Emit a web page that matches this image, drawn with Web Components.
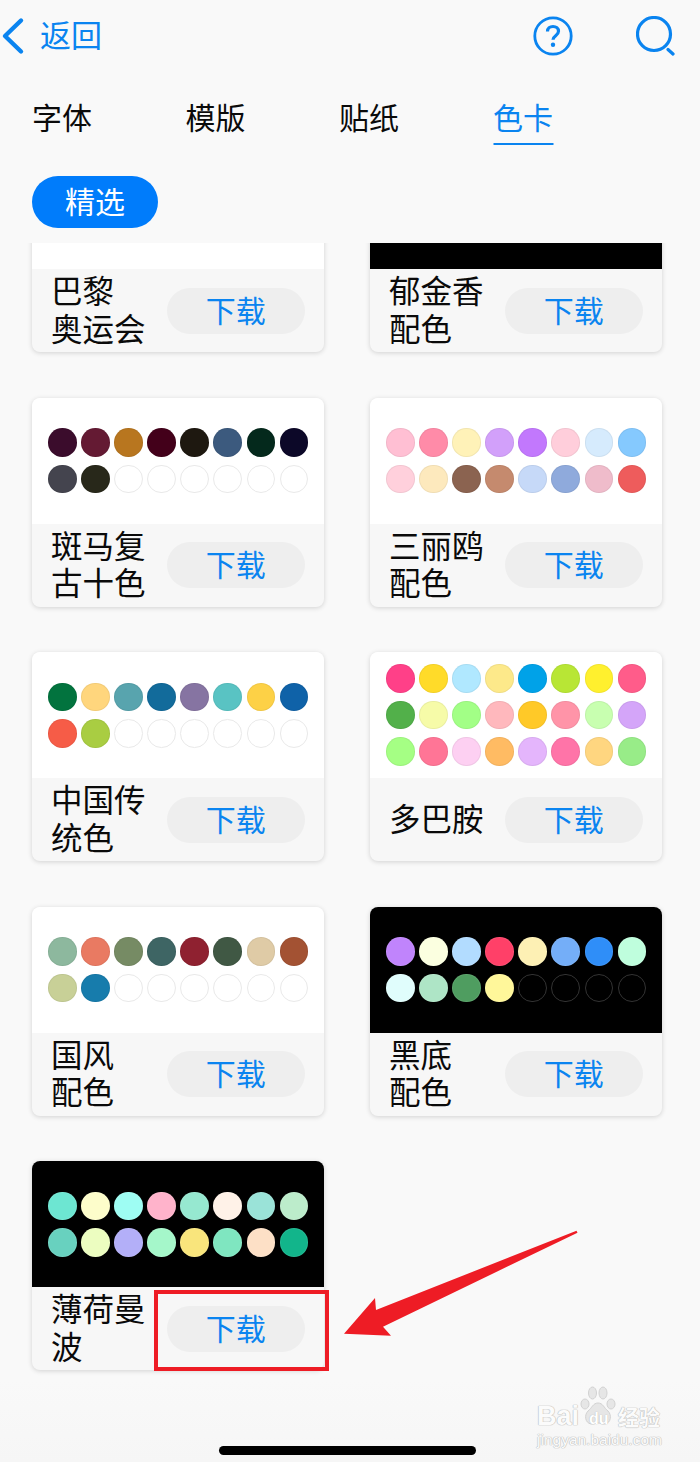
<!DOCTYPE html>
<html lang="zh-CN"><head><meta charset="utf-8"><title>色卡</title>
<style>
html,body{margin:0;padding:0;background:#f8f8f8;overflow:hidden}
body{width:700px;height:1462px;font-family:"Noto Sans CJK SC","Noto Sans",sans-serif}
</style></head><body>
<app-screen>
<nav-bar></nav-bar>
<tab-bar></tab-bar>
<filter-chip>精选</filter-chip>
<card-list>
<color-card>巴黎<br>奥运会</color-card>
<color-card dark>郁金香<br>配色</color-card>
<color-card colors="#3b0c2c,#641a33,#b8761f,#43001a,#1e1810,#3c5a7e,#04291c,#0c0828,#44444e,#28281a">斑马复<br>古十色</color-card>
<color-card colors="#ffbfd3,#ff8ba8,#fff2b8,#d2a0fa,#c278fd,#ffcedb,#d6ebfd,#85c9fe,#ffd0dc,#fde9bd,#8b6350,#c58a6e,#c6d9f8,#8faadc,#efbccb,#ee5c5c">三丽鸥<br>配色</color-card>
<color-card colors="#02733e,#ffd67d,#58a4ae,#126b9b,#8674a2,#59c3c3,#fdd146,#0f62a8,#f65c47,#a9cd42">中国传<br>统色</color-card>
<color-card colors="#ff4088,#ffdb29,#b0e8ff,#fde98a,#00a2e8,#b8e635,#fff02e,#ff5c8a,#52b04a,#f6fba8,#a2ff86,#ffb8bd,#ffc928,#ff94a8,#c8ffb0,#d4a5f9,#a5ff84,#ff7596,#fdd0f2,#ffbb63,#e4b5fc,#ff74a8,#ffd680,#98ec88">多巴胺</color-card>
<color-card colors="#8db89e,#e97a62,#768b64,#3e6564,#8f2130,#405844,#dfcba6,#a35233,#c8d097,#177cac">国风<br>配色</color-card>
<color-card dark colors="#c084fc,#fbffe0,#b2dcff,#ff4068,#fdf0b4,#74aef8,#2f8ef8,#bffedd,#e0fdfc,#aee5c6,#4f9d60,#fff79a">黑底<br>配色</color-card>
<color-card dark colors="#6de6d2,#fdfdcb,#9efdf3,#ffb3cb,#96e8d0,#fff2e8,#9ae3d8,#bceccb,#68d1bf,#ecfdc0,#b3aff8,#a5f7ca,#f9e57c,#7fe6c0,#fde0c6,#12b58b">薄荷曼<br>波</color-card>
</card-list>
<callout-mark></callout-mark>
<baidu-mark></baidu-mark>
<home-bar></home-bar>
</app-screen>
<script>
function def(name, css, html, init){
  customElements.define(name, class extends HTMLElement{
    connectedCallback(){
      if(this.shadowRoot) return;
      const r=this.attachShadow({mode:'open'});
      r.innerHTML='<style>'+css+'</style>'+html;
      if(init) init.call(this,r);
    }
  });
}
const BLUE='#0a84f0';
def('app-screen',':host{display:flex;flex-direction:column;position:relative;width:700px;height:1462px;overflow:hidden;background:linear-gradient(#f9f9f9,#f9f9f9 1380px,#f6f6f6)}','<slot></slot>');
def('nav-bar',`:host{display:flex;align-items:center;height:72px;box-sizing:border-box;color:${BLUE}}
.back{display:flex;align-items:center;gap:15px;padding-left:1px}
.t{font-size:31px;line-height:40px;padding-bottom:4px}
.a{margin-bottom:1px}
.r{margin-left:auto;display:flex;align-items:center;gap:63px;padding-right:25px}
svg{display:block}`,
`<div class="back"><svg class="a" width="24" height="38" viewBox="0 0 24 38"><path d="M20 3.500 4 19l16 15.500" fill="none" stroke="${BLUE}" stroke-width="4.400" stroke-linecap="round" stroke-linejoin="round"/></svg><span class="t">返回</span></div>
<div class="r"><svg width="40" height="40" viewBox="0 0 40 40"><circle cx="20" cy="20" r="18.200" fill="none" stroke="${BLUE}" stroke-width="2.800"/><path d="M14.500 15.500c0-3.300 2.400-5 5.500-5s5.500 1.800 5.500 4.800c0 4.400-5.500 4.300-5.500 8.400" fill="none" stroke="${BLUE}" stroke-width="3.200"/><circle cx="20" cy="28.800" r="2.200" fill="${BLUE}"/></svg>
<svg width="39" height="40" viewBox="0 0 39 40"><circle cx="18" cy="18" r="16.500" fill="none" stroke="${BLUE}" stroke-width="3.200"/><path d="M32 33.500l5 4.500" fill="none" stroke="${BLUE}" stroke-width="3.200" stroke-linecap="round"/></svg></div>`);
def('tab-bar',`:host{display:flex;gap:93.500px;padding-left:32px;height:72px;box-sizing:border-box;font-size:30px;color:#0a0a0a}
div{height:71px;line-height:88px;width:60px;text-align:center;white-space:nowrap;box-sizing:border-box}
.on{color:${BLUE};box-shadow:0 2.500px 0 -0.500px ${BLUE};width:61px}`,
`<div>字体</div><div>模版</div><div>贴纸</div><div class="on">色卡</div>`);
def('filter-chip',`:host{display:flex;align-items:center;justify-content:center;align-self:flex-start;margin:32px 0 15px 32px;width:126px;height:52px;box-sizing:border-box;padding-bottom:4px;border-radius:26px;background:#007cfb;color:#fff;font-size:30px;line-height:48px}`,'<slot></slot>');
def('card-list',`:host{display:block;height:1219px;overflow:hidden}
.g{display:grid;grid-template-columns:292px 292px;column-gap:46px;row-gap:45.500px;padding:0 0 0 32px;margin-top:-100px}`,'<div class="g"><slot></slot></div>');
def('dl-button',`:host{display:flex;align-items:center;justify-content:center;width:138.500px;height:46px;box-sizing:border-box;padding:0 0 4px 0;border-radius:23px;background:#eeeeee;color:${BLUE};font-size:30px;line-height:42px;flex:none}`,'<slot></slot>');
def('color-card',`:host{display:flex;flex-direction:column;width:292px;height:209px;border-radius:8px;overflow:hidden;background:#f7f7f7;box-shadow:0 1px 5px rgba(0,0,0,.16)}
.sw{height:126px;background:#fff;display:grid;grid-template-columns:repeat(8,28.500px);column-gap:4.600px;row-gap:8px;align-content:center;padding-left:16px}
:host([dark]) .sw{background:#000}
.d{width:28.500px;height:28.500px;border-radius:50%;box-sizing:border-box;border:1px solid rgba(0,0,0,.05)}
.e{border:1px solid #e9e9e9}
:host([dark]) .d{border-color:rgba(255,255,255,.08)}
:host([dark]) .d.e{border-color:#333}
.ft{flex:1;display:flex;align-items:center;padding:0 19px 0 19px;box-sizing:border-box}
.n{flex:1;font-size:31.500px;line-height:37.500px;color:#0a0a0a;white-space:nowrap;padding-bottom:4px}`,
`<div class="sw"></div><div class="ft"><div class="n"><slot></slot></div><dl-button>下载</dl-button></div>`,
function(r){
  const a=this.getAttribute('colors'); if(!a) return;
  const c=a.split(','); const n=c.length>16?24:16; const s=r.querySelector('.sw');
  for(let i=0;i<n;i++){const d=document.createElement('div');d.className='d'+(c[i]?'':' e');if(c[i])d.style.background=c[i];s.appendChild(d);}
});
def('callout-mark',`:host{display:block;position:absolute;left:0;top:0;width:700px;height:1462px;pointer-events:none}
.box{position:absolute;left:154px;top:1290px;width:175px;height:81px;box-sizing:border-box;border:4px solid #ee1c25}
svg{position:absolute;left:340px;top:1225px}`,
`<div class="box"></div><svg width="245" height="115" viewBox="340 1225 245 115"><polygon points="344,1333.700 375,1298 376,1310 576.500,1230.700 577.500,1232.700 383,1326.700 391,1335.700" fill="#ee1c25"/></svg>`);
def('baidu-mark',`:host{display:block;position:absolute;left:532px;top:1384px;width:135px;height:64px;color:#fbfbfb;font-family:"Liberation Sans",sans-serif;pointer-events:none}
.h{position:absolute;text-shadow:0 0 1px #bdbdbd,0 0 1px #bdbdbd,0 0 1px #bdbdbd}
.b{left:5px;top:18px;font-size:27px;line-height:28px;font-weight:700}
.du{left:57px;top:26px;font-size:16px;line-height:18px;font-weight:700;color:#fff;text-shadow:0 0 1px #aaa}
.j{left:86px;top:19px;font-size:21px;line-height:26px;font-family:"Noto Sans CJK SC",sans-serif;font-weight:700}
.u{left:5px;top:47px;font-size:15.500px;line-height:17px}
svg{position:absolute;left:48px;top:2px}`,
`<svg width="36" height="44" viewBox="0 0 36 44" fill="#e6e6e6" stroke="#d2d2d2" stroke-width="1"><ellipse cx="5" cy="18" rx="4" ry="5"/><ellipse cx="12.500" cy="7" rx="4" ry="6"/><ellipse cx="23" cy="7" rx="4" ry="6"/><ellipse cx="31" cy="18" rx="4" ry="5"/><path d="M18 17c5 0 6 5 10 8 4 4 3 12-3 13-3 .5-5-1-7-1s-4 1.500-7 1c-6-1-7-9-3-13 4-3 5-8 10-8z"/></svg>
<span class="h b">Bai</span><span class="h du">du</span><span class="h j">经验</span><span class="h u">jingyan.baidu.com</span>`);
def('home-bar',`:host{display:block;position:absolute;left:219px;top:1446px;width:257px;height:9px;border-radius:5px;background:#000}`,'');
</script>
</body></html>
